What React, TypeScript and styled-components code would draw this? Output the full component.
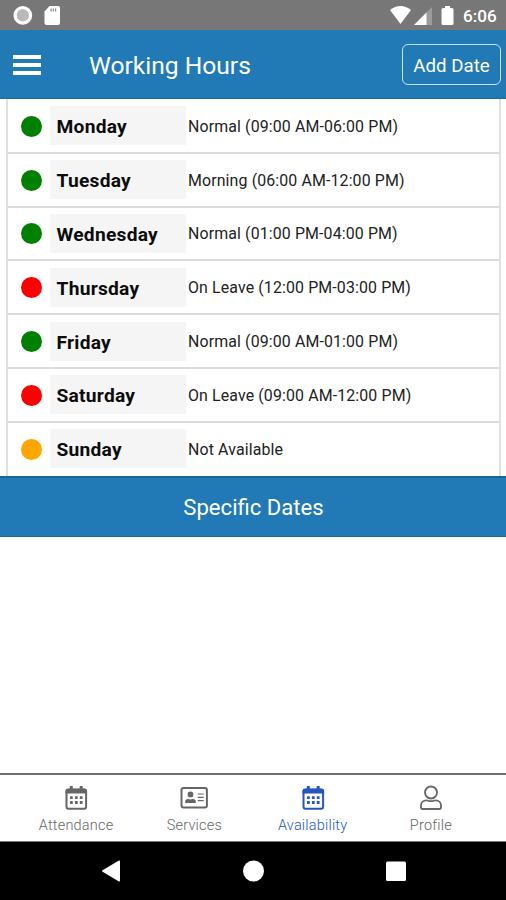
import React from "react";
import styled, { createGlobalStyle } from "styled-components";

const GlobalStyle = createGlobalStyle`
  * { box-sizing: border-box; }
  body { margin: 0; background: #fff; font-family: Roboto, "Liberation Sans", sans-serif; }
`;

const Screen = styled.div`
  display: flex;
  flex-direction: column;
  width: 506px;
  height: 900px;
  overflow: hidden;
  background: #fff;
`;

const StatusBar = styled.div`
  display: flex;
  flex: none;
  justify-content: space-between;
  height: 30px;
  background: #777;
  color: #fff;
`;

const StatusEnd = styled.div`
  display: flex;
`;

const Clock = styled.span`
  width: 34px;
  margin: 6px 9px 0 0;
  font-size: 17.1px;
  font-weight: 500;
  line-height: 20px;
  white-space: nowrap;
`;

const Header = styled.header`
  display: flex;
  flex: none;
  align-items: center;
  height: 69px;
  padding: 0 5px 0 13px;
  background: #2179b5;
  border-bottom: 1px solid #1b6ca5;
  color: #fff;
`;

const MenuButton = styled.button`
  display: flex;
  flex-direction: column;
  gap: 4px;
  width: 28px;
  margin-top: 2px;
  padding: 0;
  border: 0;
  background: none;
`;

const MenuBar = styled.span`
  height: 4px;
  background: #fff;
`;

const Title = styled.h1`
  flex: 1;
  margin: 4px 0 0 48px;
  font-size: 24.6px;
  font-weight: 400;
  line-height: 30px;
`;

const AddButton = styled.button`
  width: 99px;
  height: 41px;
  margin-top: 1px;
  padding: 2px 0 0;
  border: 1.5px solid #c5e2fa;
  border-radius: 6px;
  background: none;
  color: #fff;
  font: 400 18.7px Roboto, sans-serif;
  white-space: nowrap;
`;

const HoursTable = styled.div`
  display: grid;
  flex: none;
  grid-template-rows: repeat(7, 53.8px);
  height: 377px;
  margin: 0 5px 0 6px;
  padding-top: 1px;
  border: solid #e0e0e0;
  border-width: 0 2px;
`;

const DayRow = styled.div`
  display: flex;
  align-items: center;
  padding-left: 13px;
  border-bottom: 2px solid #dcdcdc;
  &:last-child { border-bottom-color: transparent; }
`;

const StatusDot = styled.span<{ $color: string }>`
  width: 21px;
  height: 21px;
  margin-top: 1px;
  border-radius: 50%;
  background: ${(p) => p.$color};
`;

const DayName = styled.div`
  width: 136px;
  height: 39px;
  margin-left: 8px;
  padding: 2px 0 0 6.5px;
  background: #f5f5f5;
  color: #0c0c0c;
  font-size: 19.2px;
  font-weight: 700;
  letter-spacing: 0.25px;
  line-height: 38px;
`;

const Hours = styled.div`
  margin: 2px 0 0 2px;
  color: #222;
  font-size: 15.9px;
  font-weight: 400;
  letter-spacing: 0.13px;
  line-height: 20px;
  white-space: nowrap;
`;

const DatesBar = styled.section`
  display: flex;
  flex: none;
  align-items: center;
  justify-content: center;
  height: 61px;
  padding: 0 0 1px 1px;
  background: #2179b5;
  border-top: 2px solid #176697;
  border-bottom: 1px solid #1b6ca5;
  color: #fff;
  font-size: 22.1px;
`;

const Content = styled.main`
  flex: 1;
`;

const TabBar = styled.nav`
  display: grid;
  flex: none;
  grid-template-columns: repeat(4, 1fr);
  height: 69px;
  padding: 0 16px 0 17px;
  border-top: 2px solid #707070;
  border-bottom: 1px solid #777;
`;

const Tab = styled.div<{ $active?: boolean }>`
  display: flex;
  flex-direction: column;
  align-items: center;
  padding-top: 10px;
  color: ${(p) => (p.$active ? "#2457bd" : "#666")};
`;

const TabLabel = styled.span`
  margin-top: 5px;
  font-size: 14.5px;
  font-weight: 300;
  letter-spacing: 0.2px;
  line-height: 20px;
`;

const SystemNav = styled.footer`
  display: flex;
  flex: none;
  justify-content: space-between;
  height: 58px;
  padding: 18px 99px 0 101px;
  background: #000;
`;

const days = [
  { name: "Monday", hours: "Normal (09:00 AM-06:00 PM)", color: "#008000" },
  { name: "Tuesday", hours: "Morning (06:00 AM-12:00 PM)", color: "#008000" },
  { name: "Wednesday", hours: "Normal (01:00 PM-04:00 PM)", color: "#008000" },
  { name: "Thursday", hours: "On Leave (12:00 PM-03:00 PM)", color: "#ff0000" },
  { name: "Friday", hours: "Normal (09:00 AM-01:00 PM)", color: "#008000" },
  { name: "Saturday", hours: "On Leave (09:00 AM-12:00 PM)", color: "#ff0000" },
  { name: "Sunday", hours: "Not Available", color: "#ffa500" },
];

const StatusLeft = () => (
  <svg width="70" height="30" fill="none">
    <circle cx="22.8" cy="15.3" r="6" fill="#b9b9b9" />
    <circle cx="22.8" cy="15.3" r="7.7" stroke="#fff" strokeWidth="3.4" />
    <path d="M49.5 6H58q2 0 2 2v15q0 2-2 2H46.500q-2 0-2-2V11.500z" fill="#fff" />
    <path d="M51 8.500v3M53.300 8.500v3M55.600 8.500v3" stroke="#888" strokeWidth="1.200" />
  </svg>
);

const StatusRight = () => (
  <svg width="73" height="30">
    <path d="M0 10Q10.500 2 21 10L10.500 24z" fill="#fff" />
    <path d="M42 7v18H24z" fill="#9c9c9c" />
    <path d="M36.500 12.500V25H24z" fill="#fff" />
    <path d="M55 6h5v2h2q1.500 0 1.500 1.500v14q0 1.500-1.500 1.500h-9q-1.500 0-1.500-1.500v-14Q51.500 8 53 8h2z" fill="#fff" />
  </svg>
);

const CalendarIcon = () => (
  <svg width="28" height="26" fill="none">
    <rect x="4.500" y="4.500" width="19.600" height="19.200" rx="2" stroke="currentColor" strokeWidth="2" />
    <path d="M3.500 8.500V6q0-2.300 2.300-2.300h17Q25.100 3.700 25.100 6v2.500zM7.800 1h3v3h-3zM17.700 1h3v3h-3z" fill="currentColor" />
    <g fill="currentColor">
      {[11.3, 16.1].map((y) =>
        [8, 12.9, 17.8].map((x) => <rect key={`${x}-${y}`} x={x} y={y} width="2.800" height="2.800" rx=".5" />)
      )}
    </g>
  </svg>
);

const CardIcon = () => (
  <svg width="28" height="26" fill="none">
    <rect x="1.500" y="3" width="25.400" height="19.500" rx="2" stroke="currentColor" strokeWidth="2" />
    <circle cx="10.500" cy="9.400" r="2.900" fill="currentColor" />
    <path d="M5.200 18v-1.200q0-2.800 2.800-2.800h.6q1.900.8 3.800 0h.6q2.800 0 2.800 2.800V18z" fill="currentColor" />
    <path d="M17.700 9h6M17.700 12.300h6M17.700 15.700h6" stroke="currentColor" strokeWidth="1.200" />
  </svg>
);

const ProfileIcon = () => (
  <svg width="28" height="26" fill="none" stroke="currentColor" strokeWidth="1.800">
    <circle cx="14" cy="7.500" r="6" />
    <path d="M9.500 15.300q1 0 2 .5 2.500.8 5 0 1-.500 2-.500c3.500 0 5.500 2.300 5.500 5.200v1.700q0 1.800-1.800 1.800H5.800Q4 24 4 22.200v-1.700c0-2.900 2-5.200 5.500-5.200z" />
  </svg>
);

const tabs = [
  { label: "Attendance", Icon: CalendarIcon },
  { label: "Services", Icon: CardIcon },
  { label: "Availability", Icon: CalendarIcon, active: true },
  { label: "Profile", Icon: ProfileIcon },
];

export default function App() {
  return (
    <Screen>
      <GlobalStyle />
      <StatusBar>
        <StatusLeft />
        <StatusEnd>
          <StatusRight />
          <Clock>6:06</Clock>
        </StatusEnd>
      </StatusBar>
      <Header>
        <MenuButton aria-label="Menu">
          <MenuBar />
          <MenuBar />
          <MenuBar />
        </MenuButton>
        <Title>Working Hours</Title>
        <AddButton>Add Date</AddButton>
      </Header>
      <HoursTable>
        {days.map((day) => (
          <DayRow key={day.name}>
            <StatusDot $color={day.color} />
            <DayName>{day.name}</DayName>
            <Hours>{day.hours}</Hours>
          </DayRow>
        ))}
      </HoursTable>
      <DatesBar>Specific Dates</DatesBar>
      <Content />
      <TabBar>
        {tabs.map(({ label, Icon, active }) => (
          <Tab key={label} $active={active}>
            <Icon />
            <TabLabel>{label}</TabLabel>
          </Tab>
        ))}
      </TabBar>
      <SystemNav>
        <svg width="20" height="22">
          <path d="M2 10Q0 11 2 12L17.500 21.300Q19 22 19 20.500V1.500Q19 0 17.500.700z" fill="#fff" />
        </svg>
        <svg width="22" height="22">
          <circle cx="10.500" cy="11" r="10.500" fill="#fff" />
        </svg>
        <svg width="21" height="22">
          <rect x="0" y="1.500" width="20" height="19.500" rx="1.500" fill="#fff" />
        </svg>
      </SystemNav>
    </Screen>
  );
}
